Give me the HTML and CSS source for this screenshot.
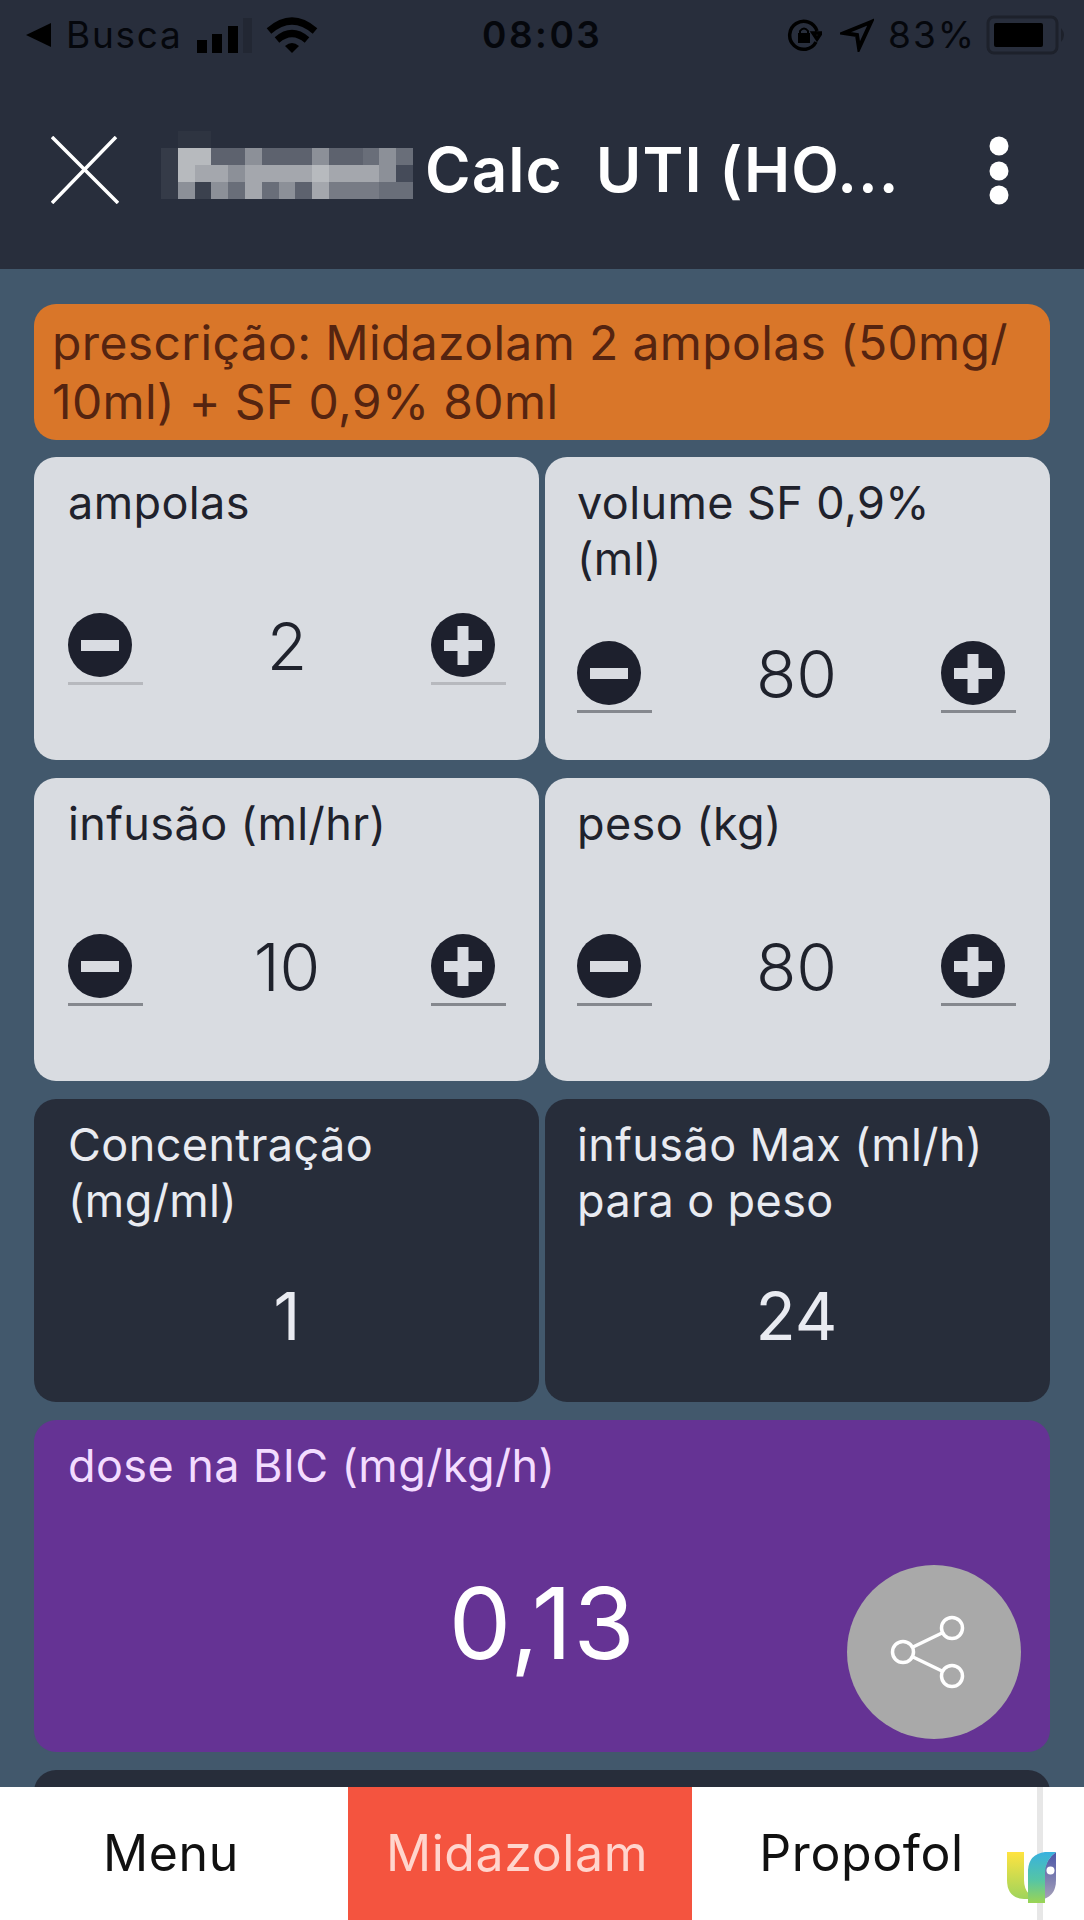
FILE: index.html
```
<!DOCTYPE html>
<html lang="pt-BR">
    <head>
        <meta charset="utf-8">
        <title>Calc UTI</title>
        <link rel="stylesheet" href="styles.css">
    </head>
    <body>
        <svg width="0" height="0" class="defs">
            <symbol id="minus" viewBox="0 0 75 76">
                <circle cx="32" cy="39" r="32" fill="#1d202d"/>
                <rect x="13" y="34" width="38" height="11" fill="#d9dce2"/>
            </symbol>
            <symbol id="plus" viewBox="0 0 75 76">
                <circle cx="32" cy="39" r="32" fill="#1d202d"/>
                <path d="M13 39.500H51M32 20V59" stroke="#d9dce2" stroke-width="11"/>
            </symbol>
        </svg>

        <header class="header">
            <div class="status">
                <svg class="back" width="26" height="26"><path d="M0 13L25 1V25Z"/></svg>
                <span class="busca">Busca</span>
                <svg class="signal" width="56" height="36"><path d="M0 23h10v13H0zM15 17h10v19H15zM31 9h10v27H31z"/><path d="M46 1h9v35h-9z" fill="#222733"/></svg>
                <svg class="wifi" width="52" height="36" fill="none" stroke="#000" stroke-width="7">
                    <path d="M3 14Q26 -6 49 14M11 23Q26 10 41 23"/><path d="M26 36L19 29Q26 23 33 29Z" fill="#000" stroke="none"/>
                </svg>
                <span class="time">08:03</span>
                <svg class="lock" width="36" height="34" fill="none" stroke="#000" stroke-width="3.500">
                    <path d="M30 24A14 14 0 1 1 31 13M27 15h8l-4 6z"/><path d="M12 15h12v10H12z" fill="#000" stroke="none"/><path d="M14 16v-3q4-5 8 0v3" stroke-width="2"/>
                </svg>
                <svg class="arrow" width="34" height="34" fill="none" stroke="#000" stroke-width="4"><path d="M31 4L4 15L17 17L19 30Z"/></svg>
                <span class="percent">83%</span>
                <svg class="battery" width="80" height="40">
                    <rect x="2" y="2" width="69" height="36" rx="6" fill="none" stroke="#1d212b" stroke-width="3"/>
                    <rect x="8" y="8" width="49" height="24" rx="2"/>
                    <path d="M75 13q6 7 0 14z" fill="#1d212b"/>
                </svg>
            </div>
            <div class="titlebar">
                <svg class="close" width="68" height="68" stroke="#fff" stroke-width="3.500"><path d="M1 1L67 67M65 1L1 67"/></svg>
                <!-- pixelated brand name -->
                <svg class="mosaic" width="252" height="68" viewBox="0 0 15 4" preserveAspectRatio="none" shape-rendering="crispEdges">
                    <path fill="#2e3441" d="M1 0h2v1H1z"/>
                    <path fill="#353b48" d="M0 1h1v3H0z"/>
                    <path fill="#3b414e" d="M2 3h1v1H2z"/>
                    <path fill="#b7babe" d="M1 1h2v1H1zM1 2h1v1H1zM9 2h1v1H9z"/>
                    <path fill="#5d626e" d="M3 1h2v1H3zM6 1h3v1H6zM10 1h2v1h-2zM8 3h1v1H8z"/>
                    <path fill="#696e79" d="M12 1h1v1h-1zM14 1h1v1h-1zM4 3h1v1H4zM6 3h1v1H6zM13 3h2v1h-2z"/>
                    <path fill="#8c9098" d="M5 1h1v1H5zM9 1h1v1H9zM13 1h1v2h-1zM4 2h1v1H4zM1 3h1v1H1zM3 3h1v1H3zM7 3h1v1H7z"/>
                    <path fill="#a4a7ad" d="M2 2h2v1H2zM5 2h4v1H5zM10 2h3v1h-3zM5 3h1v1H5zM9 3h1v1H9z"/>
                    <path fill="#777b85" d="M10 3h3v1h-3z"/>
                    <path fill="#454b59" d="M14 2h1v1h-1z"/>
                </svg>
                <h1 class="title">Calc&nbsp; UTI (HO...</h1>
                <svg class="dots" width="20" height="70" fill="#fff"><circle cx="10" cy="11" r="9.500"/><circle cx="10" cy="36" r="9.500"/><circle cx="10" cy="60" r="9.500"/></svg>
            </div>
        </header>

        <main class="content">
            <p class="prescription">prescrição: Midazolam 2 ampolas (50mg/<br>10ml) + SF 0,9% 80ml</p>
            <div class="cards">
                <section class="card">
                    <h2>ampolas</h2>
                    <div class="stepper">
                        <svg class="step soft"><use href="#minus"/></svg>
                        <span>2</span>
                        <svg class="step soft"><use href="#plus"/></svg>
                    </div>
                </section>
                <section class="card">
                    <h2>volume SF 0,9%<br>(ml)</h2>
                    <div class="stepper">
                        <svg class="step"><use href="#minus"/></svg>
                        <span>80</span>
                        <svg class="step"><use href="#plus"/></svg>
                    </div>
                </section>
                <section class="card">
                    <h2>infusão (ml/hr)</h2>
                    <div class="stepper">
                        <svg class="step"><use href="#minus"/></svg>
                        <span>10</span>
                        <svg class="step"><use href="#plus"/></svg>
                    </div>
                </section>
                <section class="card">
                    <h2>peso (kg)</h2>
                    <div class="stepper">
                        <svg class="step"><use href="#minus"/></svg>
                        <span>80</span>
                        <svg class="step"><use href="#plus"/></svg>
                    </div>
                </section>
                <section class="card dark">
                    <h2>Concentração<br>(mg/ml)</h2>
                    <div class="result">1</div>
                </section>
                <section class="card dark">
                    <h2>infusão Max (ml/h)<br>para o peso</h2>
                    <div class="result">24</div>
                </section>
                <section class="card dose">
                    <h2>dose na BIC (mg/kg/h)</h2>
                    <div class="result">0,13</div>
                </section>
                <section class="card dark next"></section>
            </div>
        </main>

        <div class="share">
            <svg width="88" height="78" fill="none" stroke="#fff" stroke-width="3.500">
                <circle cx="13" cy="39" r="10.500"/><circle cx="62" cy="15" r="10.500"/><circle cx="62" cy="63" r="10.500"/>
                <path d="M23 34L52 20M23 44L52 58"/>
            </svg>
        </div>

        <nav class="tabs">
            <div class="tab">Menu</div>
            <div class="tab active">Midazolam</div>
            <div class="tab propofol">Propofol</div>
        </nav>

        <svg class="logo" width="50" height="52" viewBox="0 0 50 52">
            <defs>
                <linearGradient id="yellow" x2="0" y2="1"><stop stop-color="#ffe340"/><stop offset="1" stop-color="#9fd45c"/></linearGradient>
                <linearGradient id="teal" x2="0" y2="1"><stop stop-color="#38b1df"/><stop offset=".55" stop-color="#55c5a5"/><stop offset="1" stop-color="#9bd454"/></linearGradient>
                <linearGradient id="violet" x2="0" y2="1"><stop stop-color="#4a55a8"/><stop offset="1" stop-color="#a5a0b8"/></linearGradient>
            </defs>
            <path fill="url(#yellow)" d="M0 0H17V28Q17 37 22 42V47H17Q0 46 0 28Z"/>
            <path fill="url(#violet)" d="M49 0V28Q49 43 37 47V20Q39 7 49 0Z"/>
            <path fill="url(#teal)" d="M21 51V18Q22 2 38 0H49Q38 8 38 21V51Z"/>
            <circle cx="43.500" cy="18.500" r="4" fill="#fff"/>
        </svg>
    </body>
</html>
```
FILE: styles.css
```
* {
    box-sizing: border-box;
}
body {
    margin: 0;
    height: 1920px;
    display: flex;
    flex-direction: column;
    overflow: hidden;
    position: relative;
    background-color: #42586c;
    font-family: Inter, Roboto, sans-serif;
}
svg {
    display: block;
    flex: none;
}
.defs {
    position: absolute;
}
h1, h2, p {
    margin: 0;
    font-weight: 400;
}

/* header */
.header {
    flex: none;
    height: 269px;
    background-color: #282e3c;
}
.status {
    display: flex;
    align-items: center;
    height: 70px;
    padding-left: 26px;
    font-size: 37px;
    line-height: 70px;
    white-space: nowrap;
    color: #05070c;
}
.busca {
    width: 130px;
    padding-left: 14px;
    letter-spacing: 1.7px;
}
.signal {
    margin-left: 15px;
}
.wifi {
    margin-left: 13px;
}
.time {
    width: 123px;
    margin-left: 164px;
    font-weight: 600;
    letter-spacing: 2.5px;
}
.lock {
    margin-left: 181px;
}
.arrow {
    margin-left: 18px;
}
.percent {
    width: 98px;
    margin-left: 14px;
    letter-spacing: 2px;
}
.titlebar {
    display: flex;
    align-items: center;
    height: 199px;
    padding-left: 51px;
}
.mosaic {
    margin: -9px 0 0 42px;
}
.title {
    width: 560px;
    padding-left: 12px;
    font-size: 62px;
    font-weight: 600;
    letter-spacing: 1px;
    white-space: nowrap;
    color: #fff;
}
.dots {
    margin-left: 16px;
}

/* calculator */
.content {
    flex: 1;
    min-height: 0;
    overflow: hidden;
    padding: 35px 34px 0;
}
.prescription {
    height: 136px;
    margin-bottom: 17px;
    padding: 9px 18px;
    border-radius: 22px;
    background-color: #d97629;
    font-size: 48px;
    line-height: 59px;
    letter-spacing: 0.37px;
    white-space: nowrap;
    color: #552410;
}
.cards {
    display: grid;
    grid-template-columns: 1fr 1fr;
    grid-template-rows: 303px 303px 303px 332px 303px;
    gap: 18px 6px;
}
.card {
    display: flex;
    flex-direction: column;
    padding: 18px 33px 0 34px;
    border-radius: 22px;
    background-color: #d9dce1;
    color: #1f222c;
}
.card:nth-child(even) {
    padding: 18px 34px 0 32px;
}
.card h2 {
    font-size: 45px;
    line-height: 56px;
    letter-spacing: 0.4px;
    white-space: nowrap;
}
.stepper {
    flex: 1;
    display: flex;
    align-items: center;
    justify-content: space-between;
    font-size: 66px;
    font-weight: 350;
}
.step {
    width: 75px;
    height: 79px;
    border-bottom: 3px solid #85888e;
}
.soft {
    border-color: #b7b9be;
}
.result {
    flex: 1;
    display: flex;
    align-items: center;
    justify-content: center;
    font-size: 66px;
}
.dark {
    background-color: #272d3a;
    color: #e9ebf1;
}
.dose {
    grid-column: 1 / 3;
    background-color: #653394;
    color: #f3dcff;
}
.dose .result {
    font-size: 99px;
    letter-spacing: 1.5px;
    color: #fff;
}
.card.next {
    grid-column: 1 / 3;
}

/* floats over the dose card */
.share {
    position: absolute;
    left: 847px;
    top: 1565px;
    width: 174px;
    height: 174px;
    display: flex;
    align-items: center;
    justify-content: center;
    border-radius: 50%;
    background-color: #a9a9a9;
}

.tabs {
    flex: none;
    display: grid;
    grid-template-columns: 348px 344px 351px 1fr;
    height: 133px;
    background-color: #fff;
}
.tab {
    display: flex;
    justify-content: center;
    padding-right: 6px;
    font-size: 50px;
    line-height: 132px;
    letter-spacing: 0.6px;
    color: #111;
}
.active {
    background-color: #f4543f;
    color: #ffd5cd;
}
.propofol {
    border-right: 6px solid #e7e7e7;
}
.logo {
    position: absolute;
    left: 1007px;
    top: 1852px;
}
```
